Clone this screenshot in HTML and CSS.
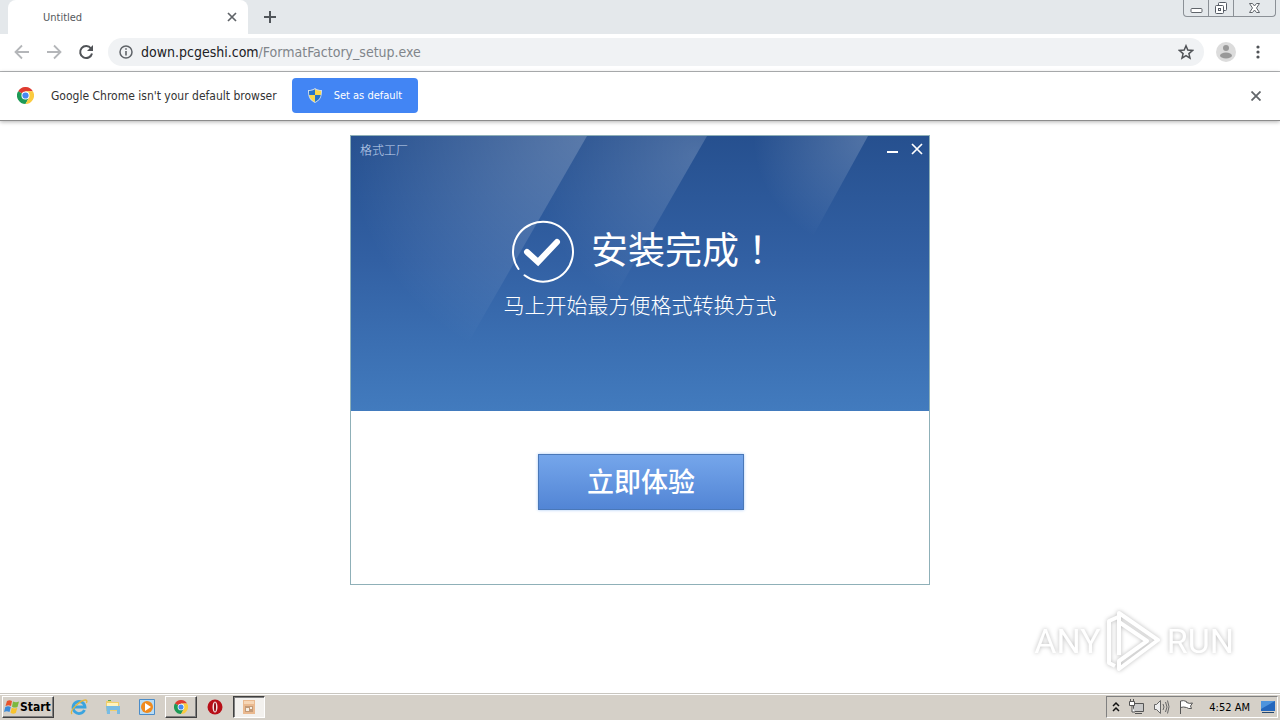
FILE: index.html
```html
<!DOCTYPE html>
<html lang="zh-CN">
<head>
    <meta charset="UTF-8">
    <meta name="viewport" content="width=device-width, initial-scale=1.0">
    <title>Untitled</title>
    <link rel="stylesheet" href="styles.css">
</head>
<body>
    <header class="browser">
        <div class="tabs">
            <div class="tab">
                <span class="tab-title">Untitled</span>
                <button class="icon-btn" aria-label="Close tab">
                    <svg width="10" height="10" viewBox="0 0 10 10"><path d="M1 1l8 8M9 1l-8 8" stroke="#5f6368" stroke-width="1.7"/></svg>
                </button>
            </div>
            <button class="icon-btn new-tab" aria-label="New tab">
                <svg width="12" height="12" viewBox="0 0 12 12"><path d="M6 0v12M0 6h12" stroke="#50555a" stroke-width="2"/></svg>
            </button>
            <div class="window-buttons">
                <button class="win-btn" aria-label="Minimize">
                    <svg width="13" height="16" viewBox="0 0 13 16"><rect x="1" y="8.500" width="11" height="4" rx="1" fill="#fff" stroke="#60656b"/></svg>
                </button>
                <button class="win-btn" aria-label="Restore">
                    <svg width="14" height="16" viewBox="0 0 14 16"><g fill="#fff" stroke="#555b64"><rect x="4.500" y="2.500" width="8" height="8" rx="1"/><rect x="1.500" y="5.500" width="8" height="8" rx="1"/><rect x="4.500" y="8.500" width="2" height="2"/></g></svg>
                </button>
                <button class="win-btn win-close" aria-label="Close">
                    <svg width="13" height="16" viewBox="0 0 13 16"><path d="M1.500 3.500h3l2 2.500 2-2.500h3l-3 4.500 3 4.500h-3l-2-2.500-2 2.500h-3l3-4.500z" fill="#fff" stroke="#60656b"/></svg>
                </button>
            </div>
        </div>

        <div class="toolbar">
            <button class="icon-btn" aria-label="Back">
                <svg width="16" height="16" viewBox="0 0 16 16" fill="none" stroke="#b4b6b9" stroke-width="1.800"><path d="M15 8H2M8 1.500L1.500 8 8 14.500"/></svg>
            </button>
            <button class="icon-btn" aria-label="Forward">
                <svg width="16" height="16" viewBox="0 0 16 16" fill="none" stroke="#b4b6b9" stroke-width="1.800"><path d="M1 8h13M8 1.500L14.500 8 8 14.500"/></svg>
            </button>
            <button class="icon-btn" aria-label="Reload">
                <svg width="16" height="16" viewBox="0 0 16 16"><path d="M13 4.500A6 6 0 1 0 14 9.500" fill="none" stroke="#505357" stroke-width="2"/><path d="M15 1v6H9z" fill="#505357"/></svg>
            </button>
            <div class="omnibox">
                <svg width="14" height="14" viewBox="0 0 14 14"><circle cx="7" cy="7" r="6" fill="none" stroke="#5f6368" stroke-width="1.500"/><path d="M7 6v4.500M7 3.200v1.600" stroke="#5f6368" stroke-width="1.600"/></svg>
                <a class="url" href="#"><span class="host">down.pcgeshi.com</span>/FormatFactory_setup.exe</a>
                <button class="icon-btn" aria-label="Bookmark">
                    <svg width="16" height="16" viewBox="0 0 16 16"><path d="M8 1.800l1.800 4.300 4.700.4-3.600 3.100 1.100 4.600L8 11.700l-4 2.500 1.100-4.600L1.500 6.500l4.700-.4z" fill="none" stroke="#505357" stroke-width="1.500"/></svg>
                </button>
            </div>
            <div class="toolbar-end">
                <button class="icon-btn" aria-label="Profile">
                    <svg width="20" height="20" viewBox="0 0 20 20"><circle cx="10" cy="10" r="10" fill="#dcdcdc"/><circle cx="10" cy="6" r="3" fill="#999"/><ellipse cx="10" cy="13.500" rx="6" ry="3" fill="#999"/></svg>
                </button>
                <button class="icon-btn" aria-label="Menu">
                    <svg width="4" height="16" viewBox="0 0 4 16" fill="#505357"><circle cx="2" cy="3" r="1.600"/><circle cx="2" cy="8" r="1.600"/><circle cx="2" cy="13" r="1.600"/></svg>
                </button>
            </div>
        </div>

        <div class="infobar">
            <svg width="17" height="17" viewBox="0 0 18 18">
                <path d="M9 9L1.200 4.500A9 9 0 0 1 16.800 4.500H9z" fill="#df3b30"/>
                <path d="M9 9L1.200 4.500A9 9 0 0 0 9 18l3.900-6.800z" fill="#1d9a56"/>
                <path d="M9 9L12.900 11.200 9 18A9 9 0 0 0 16.800 4.500H9z" fill="#fbcb3f"/>
                <circle cx="9" cy="9" r="4.300" fill="#fff"/><circle cx="9" cy="9" r="3.300" fill="#4688f1"/>
            </svg>
            <span class="info-text">Google Chrome isn't your default browser</span>
            <button class="default-btn">
                <svg width="14" height="15" viewBox="0 0 14 15">
                    <path d="M7 0c2 1.500 4 2 7 2 0 6-1 10-7 13C1 12 0 8 0 2c3 0 5-.5 7-2z" fill="#cfdcec"/>
                    <path d="M7 1.300V7H1.200C1 5.500 1 4.500 1 3c2.500 0 4-.5 6-1.700zM7 7h5.800C12.300 10 10.500 12.300 7 13.900z" fill="#2675c9"/>
                    <path d="M7 1.300C9 2.500 10.500 3 13 3c0 1.500 0 2.500-.2 4H7zM7 7v6.900C3.500 12.300 1.700 10 1.200 7z" fill="#f9d84a"/>
                </svg>
                Set as default
            </button>
            <button class="icon-btn info-close" aria-label="Dismiss">
                <svg width="10" height="10" viewBox="0 0 10 10"><path d="M.5.5l9 9M9.500.5l-9 9" stroke="#62666a" stroke-width="1.800"/></svg>
            </button>
        </div>
    </header>

    <main class="page">
        <section class="installer">
            <div class="banner">
                <svg class="rays" viewBox="0 0 578 275" preserveAspectRatio="xMidYMin slice">
                    <defs>
                        <radialGradient id="ray1" gradientUnits="userSpaceOnUse" cx="236" cy="0" r="240"><stop offset="0" stop-color="#fff" stop-opacity=".24"/><stop offset="1" stop-color="#fff" stop-opacity="0"/></radialGradient>
                        <radialGradient id="ray2" gradientUnits="userSpaceOnUse" cx="345" cy="20" r="165"><stop offset="0" stop-color="#fff" stop-opacity=".18"/><stop offset="1" stop-color="#fff" stop-opacity="0"/></radialGradient>
                        <radialGradient id="ray3" gradientUnits="userSpaceOnUse" cx="517" cy="0" r="115"><stop offset="0" stop-color="#fff" stop-opacity=".2"/><stop offset="1" stop-color="#fff" stop-opacity="0"/></radialGradient>
                    </defs>
                    <path d="M0 0h236L78 275H0z" fill="url(#ray1)"/>
                    <path d="M236 0h120L198 275H78z" fill="url(#ray2)"/>
                    <path d="M400 0h117l-66 120H380z" fill="url(#ray3)"/>
                </svg>
                <div class="titlebar">
                    <span class="app-name">格式工厂</span>
                    <button class="icon-btn" aria-label="最小化">
                        <svg width="12" height="12" viewBox="0 0 12 12"><path d="M0 9h11" stroke="#fff" stroke-width="2"/></svg>
                    </button>
                    <button class="icon-btn" aria-label="关闭">
                        <svg width="12" height="12" viewBox="0 0 12 12"><path d="M1 1l10 10M11 1L1 11" stroke="#fff" stroke-width="1.700"/></svg>
                    </button>
                </div>
                <div class="done">
                    <svg width="64" height="64" viewBox="0 0 64 64" fill="none" stroke="#fff">
                        <path d="M8.500 50A30 30 0 1 1 14.500 56.300" stroke-width="2" stroke-linecap="round"/>
                        <path d="M17 33l11 10L47 23" stroke-width="6" stroke-linecap="round"/>
                    </svg>
                    <h1 class="done-title">安装完成<span class="mark" lang="zh-TW">！</span></h1>
                </div>
                <p class="slogan">马上开始最方便格式转换方式</p>
            </div>
            <div class="actions">
                <button class="start-now">立即体验</button>
            </div>
        </section>

        <div class="watermark">
            <span>ANY</span>
            <svg width="58" height="64" viewBox="0 0 58 64" fill="none" stroke="#fff" stroke-width="4" stroke-linejoin="round">
                <path d="M13 8L4 12v42l6 3"/>
                <path d="M14 46V4l39 27-39 29 0-8 28-20-28-19"/>
            </svg>
            <span>RUN</span>
        </div>
    </main>

    <footer class="taskbar">
        <button class="start">
            <svg width="16" height="16" viewBox="0 0 16 16">
                <path d="M3 2c2-1 3-1 5 0L7 7C5 6 4 6 1.500 7z" fill="#e8542c"/>
                <path d="M9 2.500c2 1 4 1 6 0L13.500 8c-2 .8-3.500.8-5.500-.3z" fill="#7cb83d"/>
                <path d="M1.300 8c2-1 3.500-1 5.500 0l-1.300 5c-2-1-3.500-1-5.500 0z" fill="#3c8bd9"/>
                <path d="M7.800 8.700c2 1 3.500 1 5.500.3l-1.500 5c-2 1-3.500.8-5.300-.3z" fill="#f8c32c"/>
            </svg>
            Start
        </button>
        <div class="tasks">
            <button class="task" aria-label="Internet Explorer">
                <svg width="18" height="18" viewBox="0 0 18 18" fill="none"><path d="M14.500 12A6 6 0 1 1 15 9H4" stroke="#3ba4df" stroke-width="2.800"/><path d="M2 16C-1 13 10 2 15.500 2c2 0 1.500 2 .8 3" stroke="#e5b63c" stroke-width="1.300"/></svg>
            </button>
            <button class="task" aria-label="Explorer">
                <svg width="18" height="18" viewBox="0 0 18 18"><path d="M2 3h5l1 1h7v9H2z" fill="#efcf6c"/><path d="M3 5h11v3H3z" fill="#fff3bd"/><path d="M4 2h3v1H4z" fill="#59a94c"/><path d="M2 8h14v8h-3v-4H6v4H3z" fill="#78bce4"/></svg>
            </button>
            <button class="task" aria-label="Media Player">
                <svg width="18" height="18" viewBox="0 0 18 18"><path d="M1.500 1.500h15v15h-15z" fill="#b8dcf5" stroke="#4b8cc8"/><circle cx="9" cy="9" r="6" fill="#f08a1d"/><path d="M7 5l6 4-6 4z" fill="#fff"/></svg>
            </button>
            <button class="task raised" aria-label="Google Chrome">
                <svg width="14" height="14" viewBox="0 0 18 18">
                    <path d="M9 9L1.200 4.500A9 9 0 0 1 16.800 4.500H9z" fill="#df3b30"/>
                    <path d="M9 9L1.200 4.500A9 9 0 0 0 9 18l3.900-6.800z" fill="#1d9a56"/>
                    <path d="M9 9L12.900 11.200 9 18A9 9 0 0 0 16.800 4.500H9z" fill="#fbcb3f"/>
                    <circle cx="9" cy="9" r="4.300" fill="#fff"/><circle cx="9" cy="9" r="3.300" fill="#4688f1"/>
                </svg>
            </button>
            <button class="task" aria-label="Opera">
                <svg width="16" height="16" viewBox="0 0 16 16"><circle cx="8" cy="8" r="7.500" fill="#b80f18"/><ellipse cx="8" cy="8" rx="2.500" ry="5.500" fill="#f5e4e4"/><ellipse cx="8" cy="8" rx="1" ry="4.500" fill="#8d0c12"/></svg>
            </button>
            <button class="task pressed" aria-label="格式工厂">
                <svg width="16" height="16" viewBox="0 0 16 16"><path d="M2 1h12v14H2z" fill="#eab98f"/><path d="M3 2h10v3H3z" fill="#f6d6b6"/><path d="M4 7h8v6H4z" fill="#c29a78"/><path d="M5 9h3v3H5zM9 8h2v2H9z" fill="#f5eee4"/></svg>
            </button>
        </div>
        <div class="tray">
            <svg width="8" height="12" viewBox="0 0 8 12" fill="none" stroke="#111" stroke-width="1.500"><path d="M1 5l3-3 3 3M1 10l3-3 3 3"/></svg>
            <svg width="17" height="16" viewBox="0 0 17 16"><path d="M5.500 4.500h10v8h-10z" fill="#c8c8c8" stroke="#555"/><path d="M7 14.500h7" stroke="#555"/><path d="M1.500 2.500h5v4h-5zM2.500 0v2M5.500 0v2M4 7v6h3" fill="#fff" stroke="#555"/></svg>
            <svg width="17" height="16" viewBox="0 0 17 16" stroke="#666"><path d="M1.500 5.500h2l4-4v13l-4-4h-2z" fill="#eee"/><path d="M10 5q2 3 0 6M12.500 3q3 5 0 10M14.500 1.500q3 6 0 13" fill="none"/></svg>
            <svg width="17" height="16" viewBox="0 0 17 16"><path d="M2.500 15V2q3-1 6 .5v1q3 1.500 6 .5l-2 3 1 2.500q-3 .5-5-1-3-1-6 0" fill="#fff" stroke="#555"/></svg>
            <time class="clock">4:52 AM</time>
            <svg width="16" height="14" viewBox="0 0 16 14"><path d="M1 1h14v10H1z" fill="#2467bd"/><path d="M1 1h14L1 9z" fill="#4e94dd"/><path d="M2 12h12v1H2z" fill="#23466e"/></svg>
        </div>
    </footer>
</body>
</html>
```

FILE: styles.css
```css
* {
    box-sizing: border-box;
}

body {
    margin: 0;
    min-height: 100vh;
    display: flex;
    flex-direction: column;
    background-color: #fff;
    font-family: "DejaVu Sans Condensed", "Noto Sans", "Noto Sans CJK SC", sans-serif;
    font-size: 11px;
}

button {
    font-family: inherit;
    cursor: pointer;
}

svg {
    display: block;
    flex: none;
}

.icon-btn {
    padding: 0;
    border: none;
    background: none;
}

/* browser chrome */
.tabs {
    display: flex;
    align-items: center;
    height: 34px;
    padding-left: 8px;
    background-color: #e4e8eb;
}

.tab {
    display: flex;
    align-items: center;
    justify-content: space-between;
    width: 240px;
    height: 34px;
    padding: 0 11px 0 35px;
    border-radius: 8px 8px 0 0;
    background-color: #fff;
    color: #55585c;
}

.new-tab {
    margin-left: 16px;
}

.window-buttons {
    display: flex;
    align-self: flex-start;
    margin-left: auto;
    margin-right: 4px;
    border: 1px solid #8b9096;
    border-top: none;
    border-radius: 0 0 4px 4px;
}

.win-btn {
    display: flex;
    justify-content: center;
    width: 25px;
    padding: 0;
    border: none;
    border-right: 1px solid #8b9096;
    background: none;
}

.win-close {
    width: 41px;
    border-right: none;
}

.toolbar {
    display: flex;
    align-items: center;
    gap: 16px;
    height: 38px;
    padding: 0 20px 1px 14px;
    border-bottom: 1px solid #b3b5b7;
}

.omnibox {
    flex: 1;
    display: flex;
    align-items: center;
    gap: 8px;
    height: 28px;
    margin-left: -2px;
    padding: 0 10px 0 11px;
    border-radius: 14px;
    background-color: #f0f2f4;
}

.toolbar-end {
    display: flex;
    align-items: center;
    gap: 20px;
    margin-left: -4px;
}

.url {
    flex: 1;
    color: #80858a;
    font-size: 14px;
    text-decoration: none;
}

.host {
    color: #202124;
}

.infobar {
    display: flex;
    align-items: center;
    height: 49px;
    padding: 0 19px 1px 17px;
    border-bottom: 1px solid #8c8c8c;
    box-shadow: 0 1px 4px rgba(0, 0, 0, 0.3);
}

.info-text {
    margin: 0 15px 0 17px;
    color: #333;
    font-size: 12px;
}

.default-btn {
    display: flex;
    align-items: center;
    gap: 12px;
    height: 35px;
    padding: 0 16px;
    border: none;
    border-radius: 4px;
    background-color: #4285f4;
    color: #fff;
    font-size: 11px;
}

.info-close {
    margin-left: auto;
}

/* installer */
.page {
    flex: 1;
    display: flex;
    flex-direction: column;
    align-items: center;
    padding-top: 14px;
}

.installer {
    width: 100%;
    max-width: 580px;
    border: 1px solid #8fb0b8;
    background-color: #fff;
}

.banner {
    position: relative;
    padding-bottom: 92px;
    background: linear-gradient(#26508f, #3260a3 45%, #427bbe);
    color: #fff;
    font-family: "Noto Sans CJK SC", sans-serif;
}

.rays {
    position: absolute;
    inset: 0;
    width: 100%;
    height: 100%;
}

.titlebar,
.done,
.slogan {
    position: relative;
}

.titlebar {
    display: flex;
    align-items: center;
    gap: 12px;
    height: 26px;
    padding: 0 6px 0 9px;
}

.app-name {
    flex: 1;
    color: #c5d6f0;
    font-size: 12px;
    font-weight: 300;
}

.done {
    display: flex;
    align-items: center;
    justify-content: center;
    gap: 17px;
    margin-top: 57px;
    padding-left: 6px;
}

.done-title {
    margin: 0;
    padding-bottom: 6px;
    font-size: 37px;
    font-weight: 400;
    line-height: 58px;
}

.mark {
    font-family: "Noto Sans CJK TC", sans-serif;
}

.slogan {
    margin: 6px 0 0;
    font-family: "Noto Sans CJK SC", cursive;
    font-size: 21px;
    font-weight: 300;
    line-height: 30px;
    text-align: center;
}

.actions {
    display: flex;
    justify-content: center;
    padding: 43px 0 74px 2px;
}

.start-now {
    width: 206px;
    height: 56px;
    padding: 0 0 4px;
    border: 1px solid #4a78b8;
    background: linear-gradient(#75a6eb, #5285d5);
    box-shadow: 0 0 3px #a5c8f5;
    color: #fff;
    font-family: "Noto Sans CJK SC", sans-serif;
    font-size: 27px;
    font-weight: 500;
}

.watermark {
    display: flex;
    align-items: center;
    align-self: flex-end;
    gap: 4px;
    margin: auto 46px 20px 0;
    color: #fff;
    font-family: Roboto, "Liberation Sans", sans-serif;
    font-size: 34px;
    filter: drop-shadow(0 0 2px #bbb);
}

/* taskbar */
.taskbar {
    display: flex;
    align-items: center;
    height: 27px;
    padding: 0 2px;
    border-top: 1px solid #c9c6c0;
    background-color: #d5d0c8;
    box-shadow: inset 0 1px #fff;
}

.start,
.raised {
    border: 1px solid;
    border-color: #fff #404040 #404040 #fff;
    background-color: #d5d0c8;
    box-shadow: inset -1px -1px #808080;
}

.start {
    display: flex;
    align-items: center;
    width: 52px;
    height: 22px;
    padding: 0 1px;
    color: #000;
    font-size: 12px;
    font-weight: bold;
}

.tasks {
    display: flex;
    gap: 2px;
    margin-left: 9px;
}

.task {
    display: flex;
    align-items: center;
    justify-content: center;
    width: 32px;
    height: 22px;
    padding: 0;
}

.task:not(.raised):not(.pressed) {
    border: none;
    background: none;
}

.pressed {
    border: 1px solid;
    border-color: #404040 #fff #fff #404040;
    background-color: #f3f1ee;
    box-shadow: inset 1px 1px #808080;
}

.tray {
    display: flex;
    align-items: center;
    gap: 8px;
    height: 22px;
    margin-left: auto;
    padding: 0 1px 0 5px;
    border: 1px solid;
    border-color: #808080 #fff #fff #808080;
}

.clock {
    margin: 0 2px 0 6px;
}
```
